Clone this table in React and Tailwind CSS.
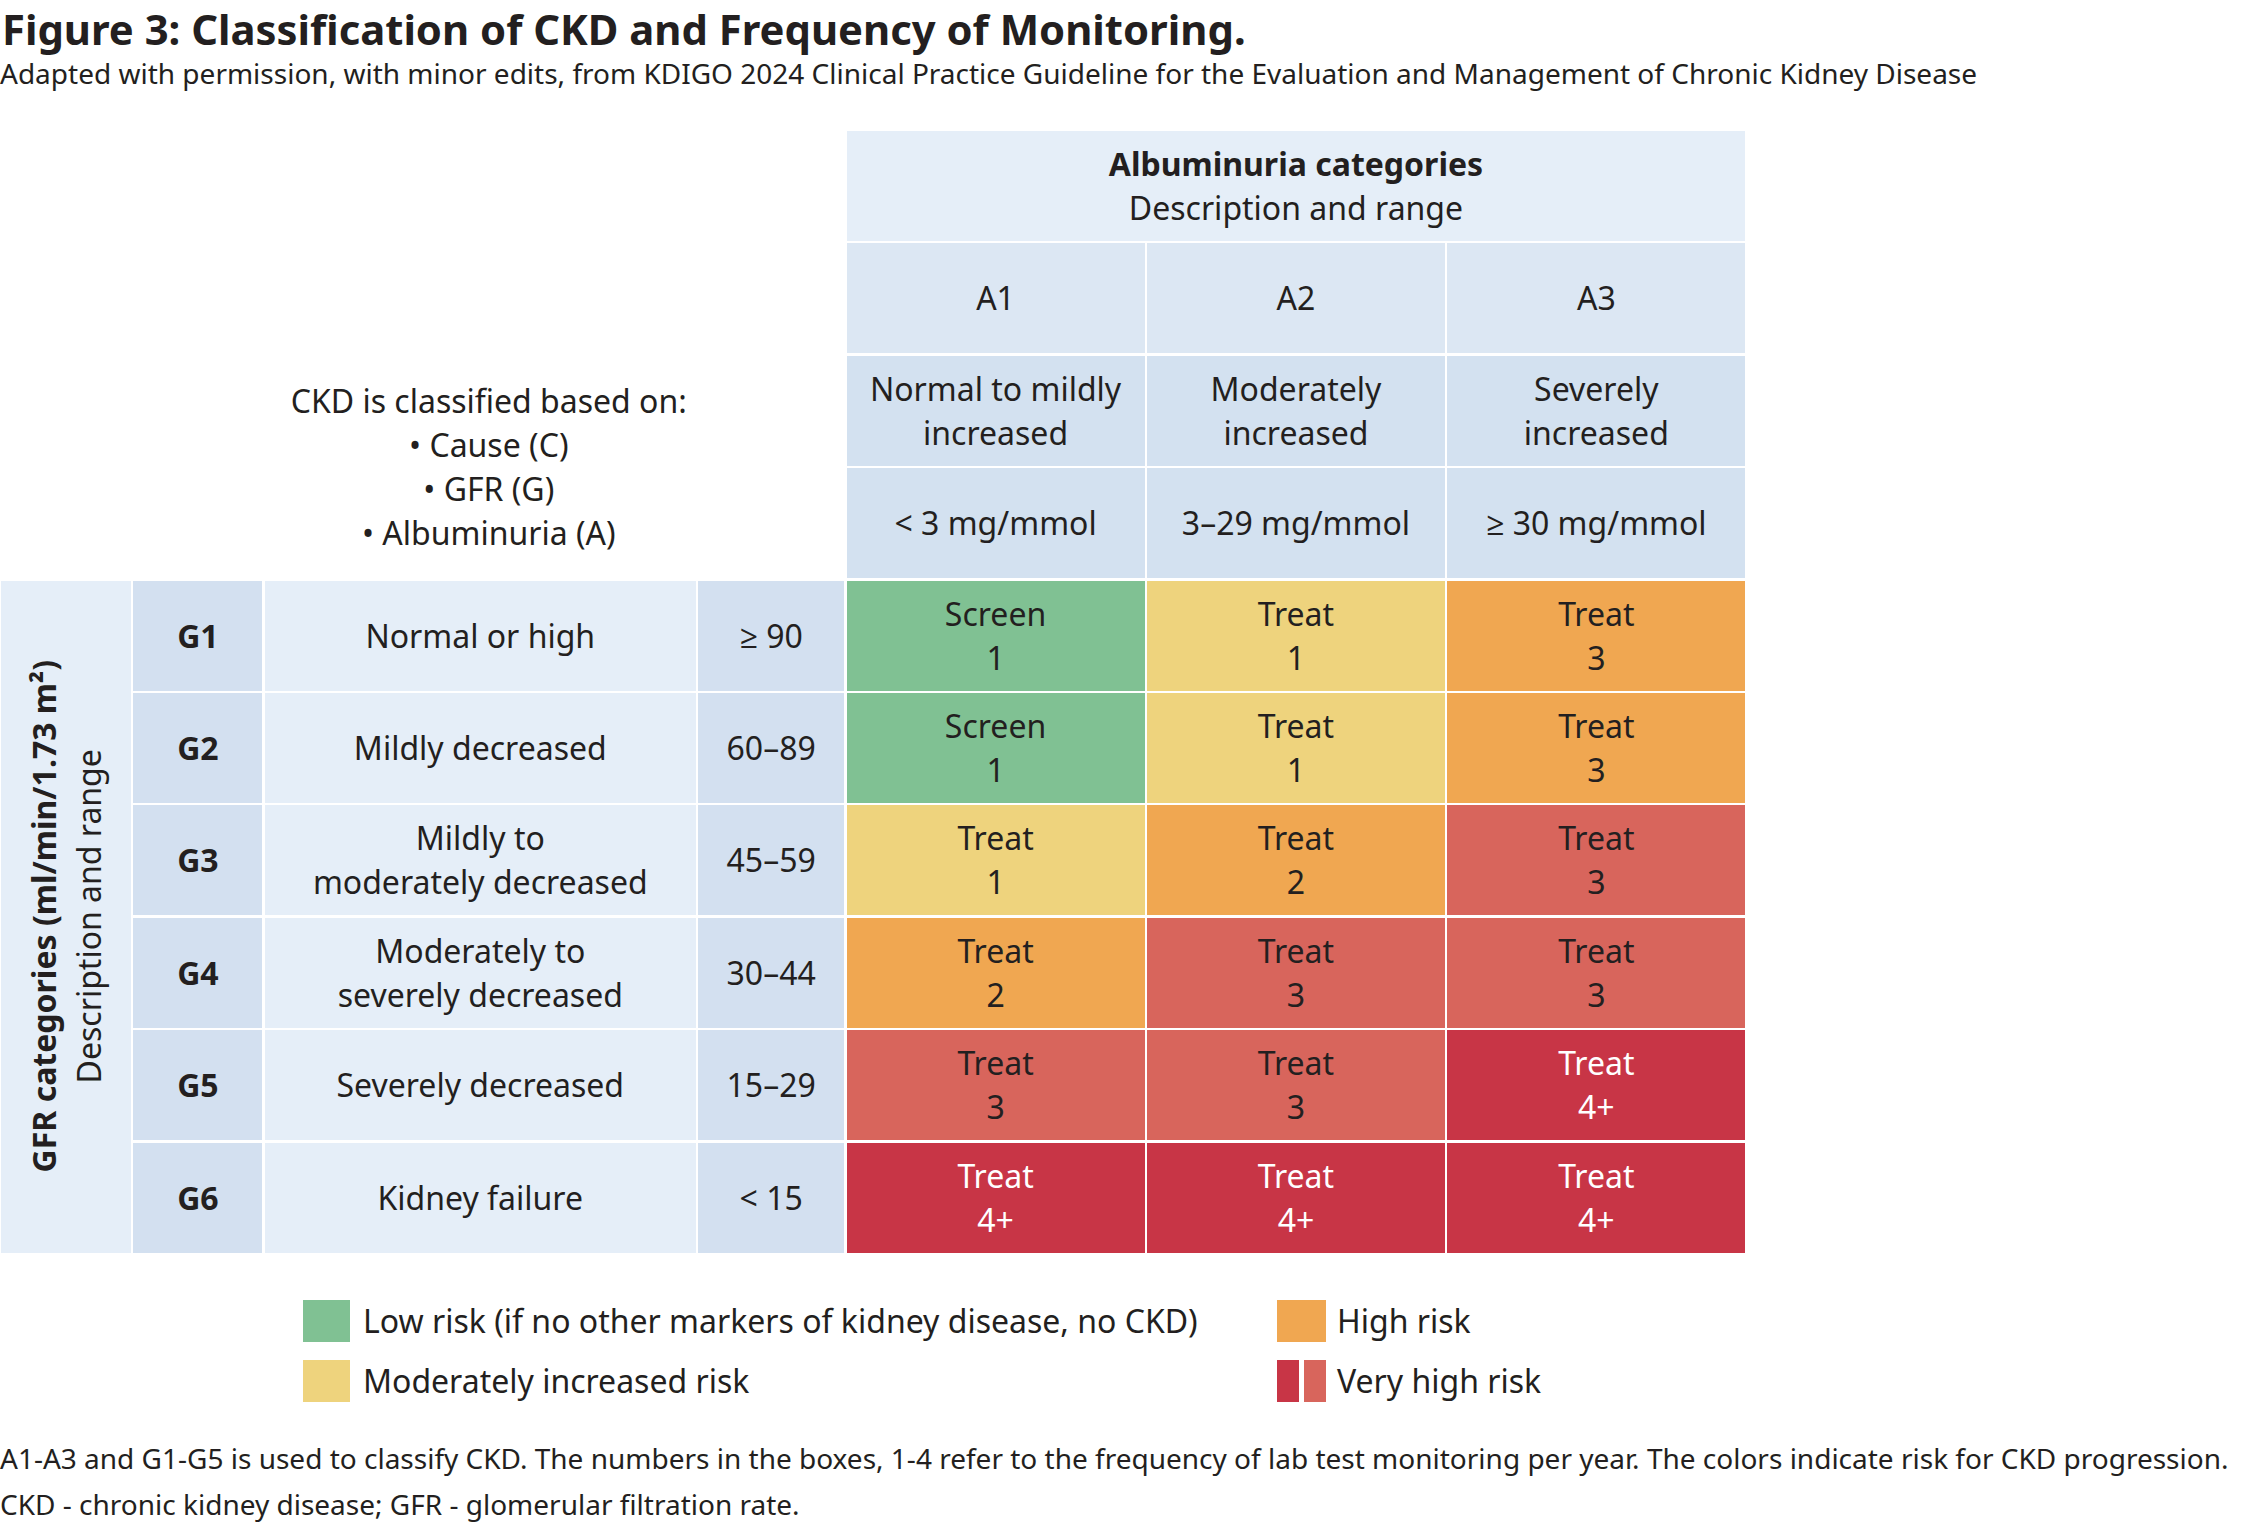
import React from 'react';

const cellColors = {
  green: 'bg-[#80c193] text-[#231f20]',
  yellow: 'bg-[#eed37d] text-[#231f20]',
  orange: 'bg-[#f0a751] text-[#231f20]',
  red: 'bg-[#d8655c] text-[#231f20]',
  dark: 'bg-[#c83546] text-white',
};

const rowStarts = ['row-start-5', 'row-start-6', 'row-start-7', 'row-start-8', 'row-start-9', 'row-start-10'];
const dataCols = ['col-start-5', 'col-start-6', 'col-start-7'];

const gfrRows = [
  { g: 'G1', desc: ['Normal or high'], range: '≥ 90', cells: [['Screen', '1', 'green'], ['Treat', '1', 'yellow'], ['Treat', '3', 'orange']] },
  { g: 'G2', desc: ['Mildly decreased'], range: '60–89', cells: [['Screen', '1', 'green'], ['Treat', '1', 'yellow'], ['Treat', '3', 'orange']] },
  { g: 'G3', desc: ['Mildly to', 'moderately decreased'], range: '45–59', cells: [['Treat', '1', 'yellow'], ['Treat', '2', 'orange'], ['Treat', '3', 'red']] },
  { g: 'G4', desc: ['Moderately to', 'severely decreased'], range: '30–44', cells: [['Treat', '2', 'orange'], ['Treat', '3', 'red'], ['Treat', '3', 'red']] },
  { g: 'G5', desc: ['Severely decreased'], range: '15–29', cells: [['Treat', '3', 'red'], ['Treat', '3', 'red'], ['Treat', '4+', 'dark']] },
  { g: 'G6', desc: ['Kidney failure'], range: '< 15', cells: [['Treat', '4+', 'dark'], ['Treat', '4+', 'dark'], ['Treat', '4+', 'dark']] },
];

const albuminuria = [
  { a: 'A1', desc: ['Normal to mildly', 'increased'], range: '< 3 mg/mmol' },
  { a: 'A2', desc: ['Moderately', 'increased'], range: '3–29 mg/mmol' },
  { a: 'A3', desc: ['Severely', 'increased'], range: '≥ 30 mg/mmol' },
];

const Cell = ({ className, children }) => (
  <div className={`flex flex-col items-center justify-center text-center ${className}`}>{children}</div>
);

const App = () => {
  return (
    <div
      className="w-[2250px] h-[1530px] bg-white text-[#231f20] overflow-hidden"
      style={{ fontFamily: '"Noto Sans", "Open Sans", sans-serif' }}
    >
      <h1 className="pl-[2px] text-[41.8px] leading-[58px] font-bold">Figure 3: Classification of CKD and Frequency of Monitoring.</h1>
      <p className="-mt-[2px] text-[28px] leading-[34px]">
        Adapted with permission, with minor edits, from KDIGO 2024 Clinical Practice Guideline for the Evaluation and Management of Chronic Kidney Disease
      </p>

      {/* table */}
      <div className="mt-[41px] ml-[1px] grid grid-cols-[130px_129px_431px_146px_298px_298px_298px] grid-rows-[repeat(10,110px)] gap-[2.4px] text-[32px] leading-[44px]">
        <Cell className="col-start-2 col-span-3 row-start-3 row-span-2">
          <span>CKD is classified based on:</span>
          <span>• Cause (C)</span>
          <span>• GFR (G)</span>
          <span>• Albuminuria (A)</span>
        </Cell>

        <Cell className="col-start-5 col-span-3 row-start-1 bg-[#e5eef8]">
          <span className="font-bold">Albuminuria categories</span>
          <span>Description and range</span>
        </Cell>
        {albuminuria.map((col, i) => (
          <React.Fragment key={col.a}>
            <Cell className={`row-start-2 bg-[#dce7f3] ${dataCols[i]}`}>{col.a}</Cell>
            <Cell className={`row-start-3 bg-[#d3e1f0] ${dataCols[i]}`}>
              {col.desc.map((d) => <span key={d}>{d}</span>)}
            </Cell>
            <Cell className={`row-start-4 bg-[#d3e1f0] ${dataCols[i]}`}>{col.range}</Cell>
          </React.Fragment>
        ))}

        <Cell className="col-start-1 row-start-5 row-span-6 bg-[#e5eef8]">
          <div className="[writing-mode:vertical-rl] rotate-180 text-center leading-[45px]">
            <div className="font-bold">GFR categories (ml/min/1.73 m²)</div>
            <div>Description and range</div>
          </div>
        </Cell>

        {gfrRows.map((row, r) => (
          <React.Fragment key={row.g}>
            <Cell className={`col-start-2 ${rowStarts[r]} bg-[#d3e0f0] font-bold`}>{row.g}</Cell>
            <Cell className={`col-start-3 ${rowStarts[r]} bg-[#e5eef8]`}>
              {row.desc.map((d) => <span key={d}>{d}</span>)}
            </Cell>
            <Cell className={`col-start-4 ${rowStarts[r]} bg-[#d3e0f0]`}>{row.range}</Cell>
            {row.cells.map(([label, n, color], i) => (
              <Cell key={i} className={`${dataCols[i]} ${rowStarts[r]} ${cellColors[color]}`}>
                <span>{label}</span>
                <span>{n}</span>
              </Cell>
            ))}
          </React.Fragment>
        ))}
      </div>

      {/* legend */}
      <div className="mt-[47px] ml-[303px] grid grid-cols-[974px_auto] gap-y-[18px] text-[32px] leading-[42px]">
        <div className="flex items-center gap-[13px]">
          <span className="w-[47px] h-[42px] bg-[#80c193]" />
          <span>Low risk (if no other markers of kidney disease, no CKD)</span>
        </div>
        <div className="flex items-center gap-[11px]">
          <span className="w-[49px] h-[42px] bg-[#f0a751]" />
          <span>High risk</span>
        </div>
        <div className="flex items-center gap-[13px]">
          <span className="w-[47px] h-[42px] bg-[#eed37d]" />
          <span>Moderately increased risk</span>
        </div>
        <div className="flex items-center gap-[11px]">
          <span className="flex w-[49px] h-[42px] gap-[5px]">
            <span className="flex-1 bg-[#c83546]" />
            <span className="flex-1 bg-[#d8655c]" />
          </span>
          <span>Very high risk</span>
        </div>
      </div>

      <div className="mt-[33px] text-[28px] leading-[46px]">
        <p>A1-A3 and G1-G5 is used to classify CKD. The numbers in the boxes, 1-4 refer to the frequency of lab test monitoring per year. The colors indicate risk for CKD progression.</p>
        <p>CKD - chronic kidney disease; GFR - glomerular filtration rate.</p>
      </div>
    </div>
  );
};

export default App;
